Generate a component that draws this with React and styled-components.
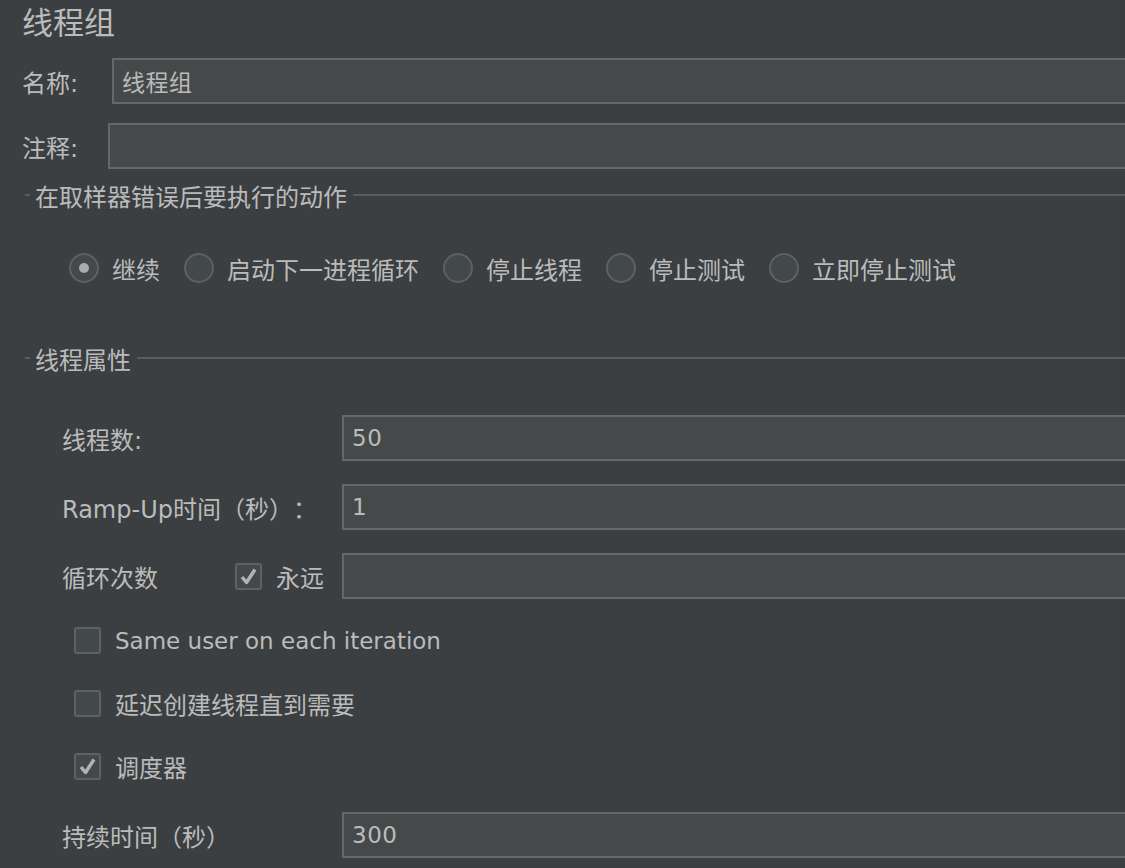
import styled, { createGlobalStyle } from "styled-components";

const GlobalStyle = createGlobalStyle`
  html, body {
    margin: 0;
    padding: 0;
    background: #3c3f41;
    overflow: hidden;
  }
  body {
    font-family: "DejaVu Sans", "Noto Sans CJK SC", sans-serif;
    color: #bbbbbb;
    text-spacing-trim: space-all;
  }
`;

const Page = styled.div`
  width: 1150px;
  height: 868px;
  display: flex;
  flex-direction: column;
  font-size: 24px;
`;

const Title = styled.div`
  height: 42px;
  line-height: 42px;
  padding-left: 22px;
  font-size: 31px;
  font-family: "Noto Sans CJK SC", sans-serif;
`;

const Row = styled.div`
  display: flex;
  align-items: center;
  margin-top: ${(p) => p.$top || 0}px;
  padding-left: ${(p) => p.$indent || 0}px;
`;

const Label = styled.div`
  width: ${(p) => p.$width}px;
  flex: none;
  white-space: nowrap;
  font-size: ${(p) => (p.$latin ? 23 : 24)}px;
`;

const Field = styled.div`
  flex: 1;
  height: 46px;
  box-sizing: border-box;
  background: #45494a;
  border: 2px solid #666868;
  display: flex;
  align-items: center;
  padding-left: 8px;
  font-size: 23px;
  letter-spacing: 0.5px;
  font-family: ${(p) => (p.$cjk ? '"Noto Sans CJK SC", sans-serif' : '"DejaVu Sans", sans-serif')};
`;

const SectionHead = styled.div`
  display: flex;
  align-items: center;
  height: 24px;
  margin-top: ${(p) => p.$top}px;
  padding-left: 25px;
  &::before {
    content: "";
    width: 5px;
    height: 2px;
    background: #5a5c5e;
    margin-right: 5px;
  }
  &::after {
    content: "";
    flex: 1;
    height: 2px;
    background: #5a5c5e;
    margin-left: 6px;
  }
`;

const RadioRow = styled.div`
  display: flex;
  align-items: center;
  height: 30px;
  margin-top: ${(p) => p.$top}px;
  padding-left: 69px;
  gap: 24px;
`;

const RadioItem = styled.label`
  display: flex;
  align-items: center;
  gap: 13px;
`;

const RadioCircle = styled.span`
  width: 30px;
  height: 30px;
  box-sizing: border-box;
  border-radius: 50%;
  border: 2px solid #5e6163;
  background: #43494a;
  display: flex;
  align-items: center;
  justify-content: center;
  &::after {
    content: "";
    width: 10px;
    height: 10px;
    border-radius: 50%;
    background: #a9abac;
    display: ${(p) => (p.$on ? "block" : "none")};
  }
`;

const CheckItem = styled.label`
  display: flex;
  align-items: center;
  gap: 14px;
  margin-top: ${(p) => p.$top || 0}px;
  padding-left: ${(p) => p.$indent || 0}px;
  height: 27px;
`;

const Box = styled.span`
  width: 27px;
  height: 27px;
  flex: none;
  box-sizing: border-box;
  border: 2px solid #5e6163;
  border-radius: 3px;
  background: #43494a;
  display: flex;
  align-items: center;
  justify-content: center;
`;

const Tick = () => (
  <svg width="19" height="19" viewBox="0 0 19 19">
    <path d="M3 10 L7.5 15.5 L16 2.5" fill="none" stroke="#b0b2b3" strokeWidth="3.5" strokeLinejoin="round" />
  </svg>
);

function Check({ checked, children, latin, ...rest }) {
  return (
    <CheckItem {...rest}>
      <Box>{checked && <Tick />}</Box>
      <Label $latin={latin}>{children}</Label>
    </CheckItem>
  );
}

const actions = ["继续", "启动下一进程循环", "停止线程", "停止测试", "立即停止测试"];

export default function App() {
  return (
    <>
      <GlobalStyle />
      <Page>
        <Title>线程组</Title>
        <Row $top={16} $indent={22}>
          <Label $width={90}>名称:</Label>
          <Field $cjk>线程组</Field>
        </Row>
        <Row $top={19} $indent={22}>
          <Label $width={86}>注释:</Label>
          <Field />
        </Row>

        <SectionHead $top={14}>在取样器错误后要执行的动作</SectionHead>
        <RadioRow $top={46}>
          {actions.map((a, i) => (
            <RadioItem key={a}>
              <RadioCircle $on={i === 0} />
              <span>{a}</span>
            </RadioItem>
          ))}
        </RadioRow>

        <SectionHead $top={63}>线程属性</SectionHead>
        <Row $top={45} $indent={62}>
          <Label $width={280}>线程数:</Label>
          <Field>50</Field>
        </Row>
        <Row $top={23} $indent={62}>
          <Label $width={280}>Ramp-Up时间（秒）：</Label>
          <Field>1</Field>
        </Row>
        <Row $top={23} $indent={62}>
          <Label $width={173}>循环次数</Label>
          <Check checked style={{ width: 107 }}>永远</Check>
          <Field />
        </Row>

        <Check $top={28} $indent={74} latin>Same user on each iteration</Check>
        <Check $top={36} $indent={74}>延迟创建线程直到需要</Check>
        <Check $top={36} $indent={74} checked>调度器</Check>

        <Row $top={32} $indent={62}>
          <Label $width={280}>持续时间（秒）</Label>
          <Field>300</Field>
        </Row>
      </Page>
    </>
  );
}
